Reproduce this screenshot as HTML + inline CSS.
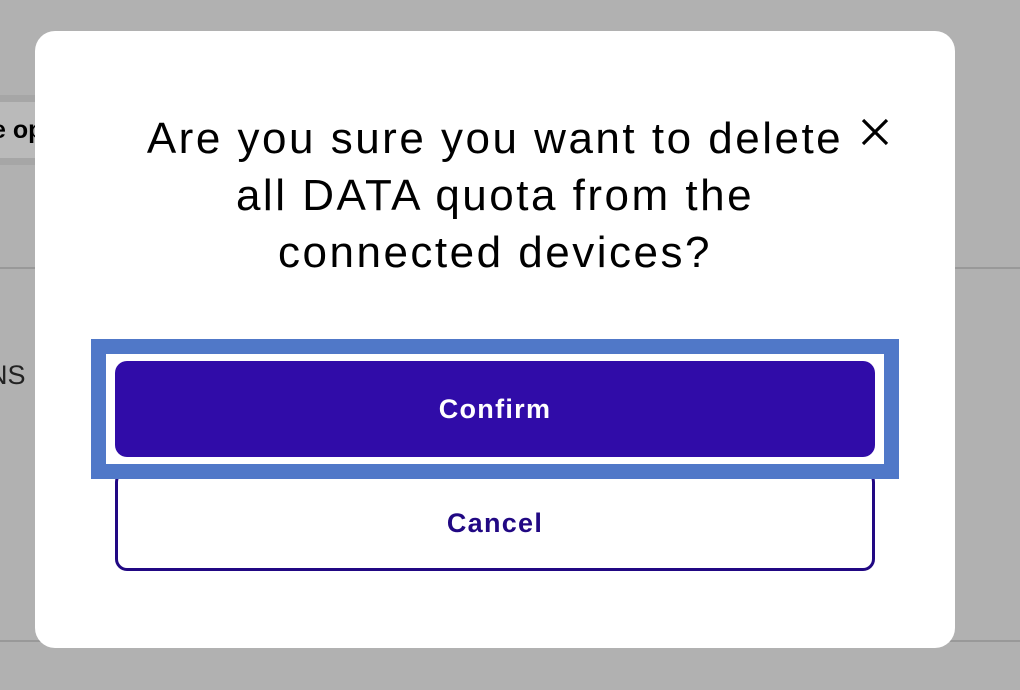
<!DOCTYPE html>
<html><head><style>
html,body{margin:0;padding:0;width:1020px;height:690px;overflow:hidden;background:#b1b1b1;font-family:"Liberation Sans",sans-serif;position:relative}
.abs{position:absolute}
.modal{left:35px;top:31px;width:920px;height:617px;background:#fff;border-radius:20px}
.title{left:0px;top:110px;width:990px;text-align:center;font-size:44px;line-height:57px;color:#000;letter-spacing:2.5px;white-space:nowrap}
.ring{left:91px;top:339px;width:778px;height:110px;border:15px solid #5078c8}
.confirm{left:115px;top:361px;width:760px;height:96px;background:#300ca8;border-radius:12px;color:#fff;font-weight:bold;font-size:27px;line-height:96px;text-align:center;letter-spacing:1.3px}
.cancel{left:115px;top:470px;width:754px;height:95px;border:3px solid #210883;border-radius:12px;color:#210883;font-weight:bold;font-size:27px;line-height:100px;text-align:center;letter-spacing:1.3px}
</style></head><body>
<div class="abs" style="left:0;top:95px;width:35px;height:70px;background:#a6a6a6"></div>
<div class="abs" style="left:0;top:102px;width:35px;height:56px;background:#bababa;overflow:hidden"><span style="position:absolute;left:-8px;top:14px;font-weight:bold;font-size:25px;white-space:nowrap">e op</span></div>
<div class="abs" style="left:0;top:267px;width:1020px;height:2px;background:#999"></div>
<div class="abs" style="left:0;top:640px;width:1020px;height:2px;background:#999"></div>
<div class="abs" style="left:-12px;top:360px;font-size:27px;color:#222">NS</div>
<div class="abs modal"></div>
<div class="abs title">Are you sure you want to delete<br>all DATA quota from the<br>connected devices?</div>
<svg class="abs" style="left:860px;top:117px" width="30" height="30" viewBox="0 0 30 30"><path d="M3 3L27 27M27 3L3 27" stroke="#000" stroke-width="3.2"/></svg>
<div class="abs cancel">Cancel</div>
<div class="abs ring"></div>
<div class="abs confirm">Confirm</div>
</body></html>
